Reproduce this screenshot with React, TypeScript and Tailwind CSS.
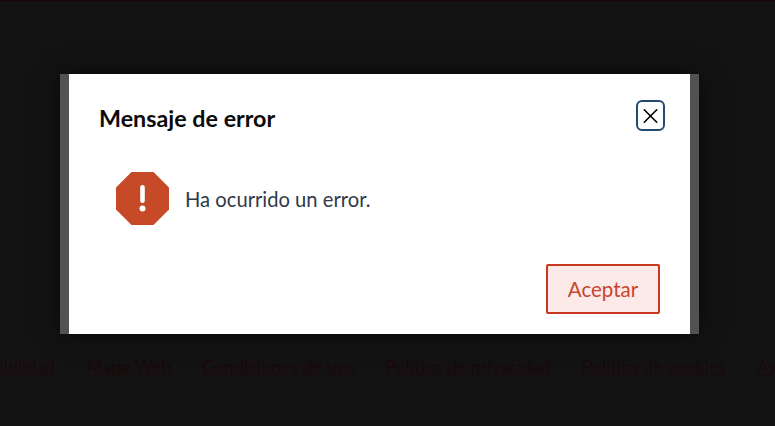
import { X } from "lucide-react";

const footerLinks = [
  "Accesibilidad",
  "Mapa Web",
  "Condiciones de uso",
  "Política de privacidad",
  "Política de cookies",
  "Ayuda",
];

export default function App() {
  return (
    <div className="relative h-[426px] w-[775px] overflow-hidden bg-[#131313] font-['Lato','Open_Sans',sans-serif]">
      {/* Page behind the overlay */}
      <div className="h-px w-full bg-[#1c0508]" />
      <div className="ml-[-46px] flex w-full justify-start gap-[31px] whitespace-nowrap pt-[355px] text-[17.8px] leading-[20px] text-[#1a090b]">
        {footerLinks.map((link) => (
          <a key={link} href="#" className="underline">
            {link}
          </a>
        ))}
      </div>

      {/* Error dialog */}
      <div className="absolute left-[60px] top-[74px] h-[260px] w-[639px] border-x-[9px] border-x-[#525252] bg-white shadow-[0_0_24px_rgba(0,0,0,0.6)]">
        <div className="flex h-full flex-col px-[30px]">
          <div className="flex items-start justify-between pt-[26px]">
            <h2 className="pt-[3px] text-[23.3px] font-bold leading-[30px] text-[#0b0b0b]">Mensaje de error</h2>
            <button className="mr-[-5px] flex h-[31px] w-[29px] items-center justify-center rounded-[6px] border-2 border-[#214a6e] text-black">
              <X className="h-[26px] w-[26px]" strokeWidth={1.5} />
            </button>
          </div>
          <div className="mt-[39px] flex items-center gap-[16px] pl-[17px]">
            <svg width="53" height="53" viewBox="0 0 53 53" className="shrink-0">
              <polygon points="15.5,0 37.5,0 53,15.5 53,37.5 37.5,53 15.5,53 0,37.5 0,15.5" fill="#c64a27" />
              <rect x="24.2" y="13" width="4.6" height="18" rx="2.2" fill="#ffffff" />
              <circle cx="26.5" cy="36.5" r="3" fill="#ffffff" />
            </svg>
            <p className="text-[20.2px] leading-[26px] text-[#2f3a4a]">Ha ocurrido un error.</p>
          </div>
          <div className="mt-auto flex justify-end pb-[20px]">
            <button className="h-[50px] w-[114px] rounded-[2px] border-2 border-[#c8391f] bg-[#fbeae7] text-[20.5px] text-[#c8452f]">
              Aceptar
            </button>
          </div>
        </div>
      </div>
    </div>
  );
}
